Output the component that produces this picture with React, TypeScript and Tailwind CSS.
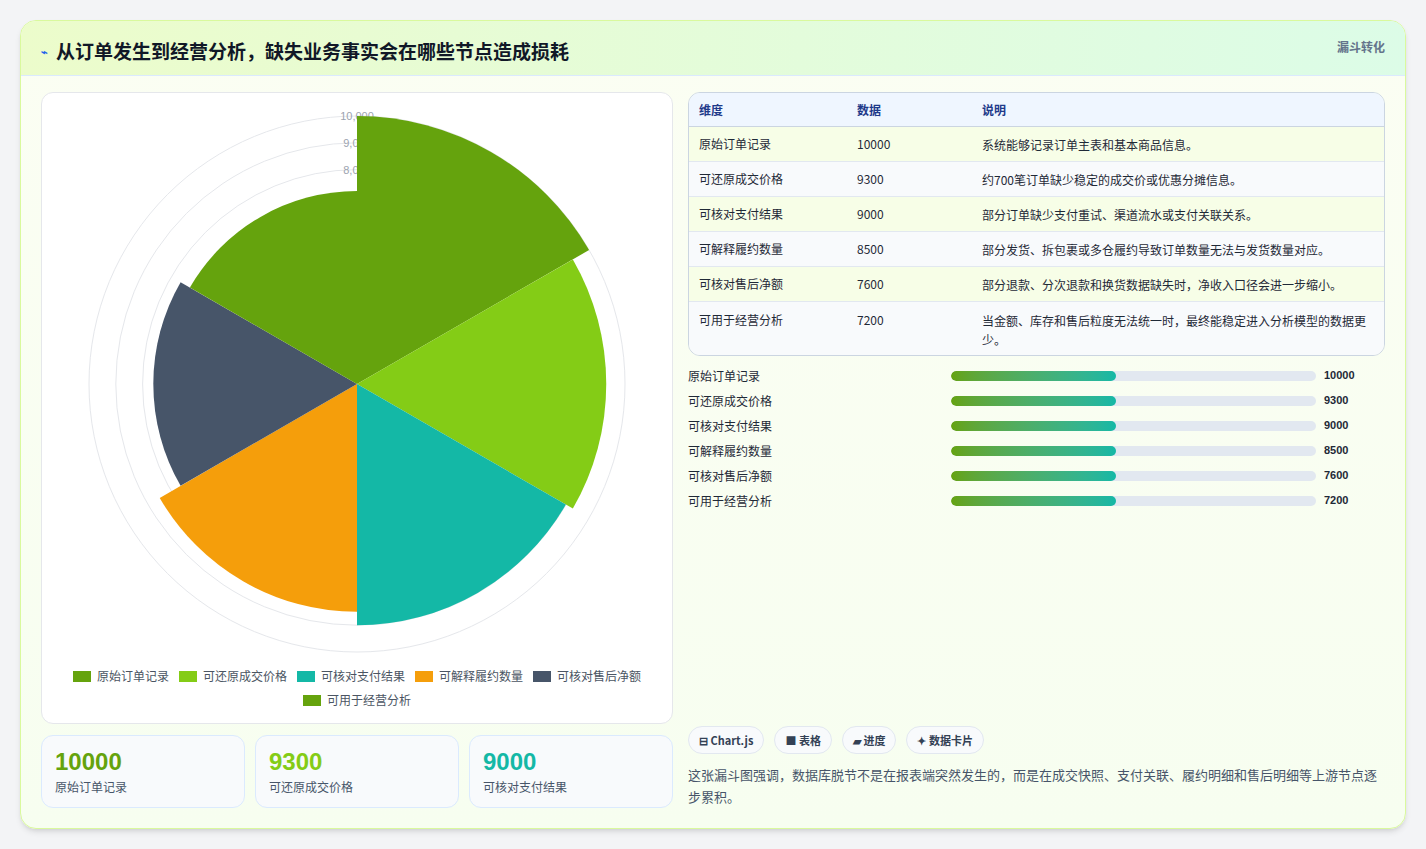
import React from "react";

const rows = [
  { n: "原始订单记录", v: 10000, d: "系统能够记录订单主表和基本商品信息。", c: "#65a30d" },
  { n: "可还原成交价格", v: 9300, d: "约700笔订单缺少稳定的成交价或优惠分摊信息。", c: "#84cc16" },
  { n: "可核对支付结果", v: 9000, d: "部分订单缺少支付重试、渠道流水或支付关联关系。", c: "#14b8a6" },
  { n: "可解释履约数量", v: 8500, d: "部分发货、拆包裹或多仓履约导致订单数量无法与发货数量对应。", c: "#f59e0b" },
  { n: "可核对售后净额", v: 7600, d: "部分退款、分次退款和换货数据缺失时，净收入口径会进一步缩小。", c: "#475569" },
  { n: "可用于经营分析", v: 7200, d: "当金额、库存和售后粒度无法统一时，最终能稳定进入分析模型的数据更少。", c: "#65a30d" },
];

const F = { fontFamily: '"Noto Sans CJK SC", "Liberation Sans", sans-serif' };

function Polar() {
  const cx = 316, cy = 289, k = 0.0268;
  const arc = (r: number, a0: number, a1: number) => {
    const p = (a: number) => [cx + r * Math.cos((a * Math.PI) / 180), cy + r * Math.sin((a * Math.PI) / 180)];
    const [x0, y0] = p(a0), [x1, y1] = p(a1);
    return `M${cx},${cy} L${x0},${y0} A${r},${r} 0 0 1 ${x1},${y1} Z`;
  };
  return (
    <svg width="632" height="560" className="block">
      {[1, 2, 3, 4, 5, 6, 7, 8, 9, 10].map((i) => (
        <circle key={i} cx={cx} cy={cy} r={i * 1000 * k} fill="none" stroke="#e5e7eb" strokeWidth="1" />
      ))}
      {[10, 9, 8, 7].map((i) => (
        <text key={i} x={cx} y={cy - i * 1000 * k + 4} textAnchor="middle" fontSize="11" fill="#9ca3af" fontFamily="Liberation Sans, sans-serif">
          {i},000
        </text>
      ))}
      {rows.map((r, i) => (
        <path key={i} d={arc(r.v * k, -90 + i * 60, -30 + i * 60)} fill={r.c} />
      ))}
    </svg>
  );
}

export default function App() {
  return (
    <div className="min-h-screen bg-[#f3f4f6] p-5 pb-5" style={F}>
      <div className="rounded-2xl border border-[#d9f99d] bg-gradient-to-b from-[#fbfef3] to-[#f7fef0] shadow-md overflow-hidden">
        <div className="flex items-start justify-between px-5 pt-4 pb-3 h-[55px] bg-gradient-to-r from-[#ecfccb] to-[#dcfce7] border-b border-[#dbeafe]">
          <div className="flex items-center gap-2 text-[19px] font-bold text-[#111827]">
            <span className="text-[#2563eb] text-[11px]">⌁</span>
            从订单发生到经营分析，缺失业务事实会在哪些节点造成损耗
          </div>
          <div className="text-[12px] font-bold text-[#64748b] mt-[1px]">漏斗转化</div>
        </div>
        <div className="flex gap-[15px] px-5 pt-4 pb-5">
          <div className="w-[632px] flex flex-col gap-[11px]">
            <div className="h-[632px] rounded-xl border border-[#e5e7eb] bg-white flex flex-col items-center pt-[2px]">
              <Polar />
              <div className="flex flex-wrap justify-center gap-x-[10px] gap-y-[6px] px-6 text-[12px] text-[#4b5563] mt-[12px]">
                {rows.map((r, i) => (
                  <div key={i} className="flex items-center gap-[6px]">
                    <span className="w-[18px] h-[11px] inline-block" style={{ background: r.c }} />
                    {r.n}
                  </div>
                ))}
              </div>
            </div>
            <div className="grid grid-cols-3 gap-[10px]">
              {rows.slice(0, 3).map((r, i) => (
                <div key={i} className="h-[73px] rounded-xl border border-[#dbeafe] bg-[#f8fafc] px-[13px] pt-[11px]">
                  <div className="text-[24px] font-bold leading-[30px]" style={{ color: r.c, fontFamily: "Liberation Sans, sans-serif" }}>{r.v}</div>
                  <div className="text-[12px] text-[#475569] mt-[1px]">{r.n}</div>
                </div>
              ))}
            </div>
          </div>
          <div className="flex-1 flex flex-col">
            <div className="rounded-xl border border-[#cbd5e1] overflow-hidden text-[12px] text-[#1f2937]">
              <div className="flex h-[34px] items-center bg-[#eff6ff] border-b border-[#cbd5e1] font-bold text-[#1e3a8a]">
                <div className="w-[168px] pl-[10px]">维度</div>
                <div className="w-[125px]">数据</div>
                <div className="flex-1">说明</div>
              </div>
              {rows.map((r, i) => (
                <div key={i} className={`flex ${i === 5 ? "min-h-[53px] items-start pt-[9px]" : "h-[35px] items-center"} border-b border-[#e2e8f0] last:border-b-0 ${i % 2 ? "bg-[#f8fafc]" : "bg-[#f7fee7]"}`}>
                  <div className="w-[168px] pl-[10px]">{r.n}</div>
                  <div className="w-[125px]">{r.v}</div>
                  <div className="flex-1 pr-3 leading-[19px]">{r.d}</div>
                </div>
              ))}
            </div>
            <div className="flex flex-col gap-[8px] mt-[11px] text-[12px] text-[#1f2937]">
              {rows.map((r, i) => (
                <div key={i} className="flex items-center h-[17px]">
                  <div className="w-[263px]">{r.n}</div>
                  <div className="w-[365px] h-[10px] rounded-full bg-[#e2e8f0] overflow-hidden">
                    <div className="h-full w-[165px] rounded-full bg-gradient-to-r from-[#65a30d] to-[#14b8a6]" />
                  </div>
                  <div className="ml-[8px] font-bold text-[11px]" style={{ fontFamily: "Liberation Sans, sans-serif" }}>{r.v}</div>
                </div>
              ))}
            </div>
            <div className="flex-1" />
            <div className="flex gap-[10px] text-[11px] font-bold text-[#334155]">
              {["⊟ Chart.js", "■ 表格", "▰ 进度", "✦ 数据卡片"].map((t) => (
                <div key={t} className="h-[28px] px-[10px] flex items-center rounded-full border border-[#e2e8f0] bg-[#f8fafc]">{t}</div>
              ))}
            </div>
            <p className="mt-[10px] text-[13px] leading-[22px] text-[#475569]">
              这张漏斗图强调，数据库脱节不是在报表端突然发生的，而是在成交快照、支付关联、履约明细和售后明细等上游节点逐步累积。
            </p>
          </div>
        </div>
      </div>
    </div>
  );
}
